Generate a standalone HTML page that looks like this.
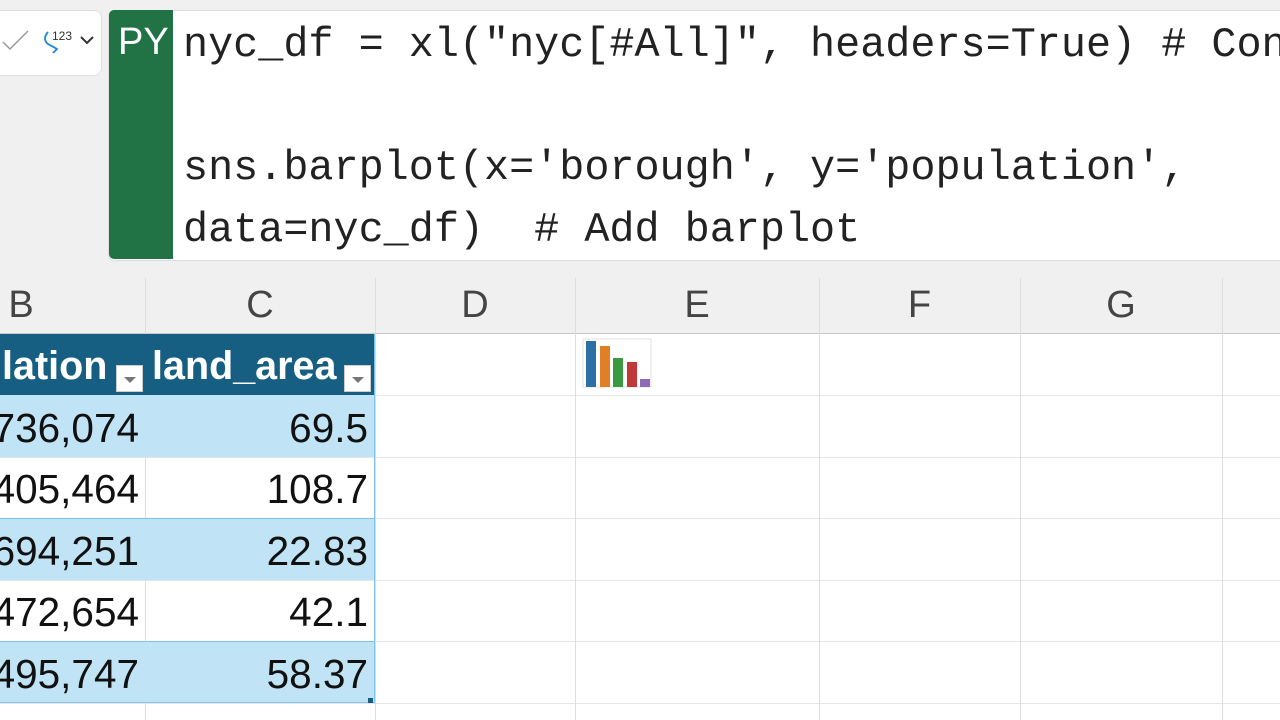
<!DOCTYPE html>
<html><head><style>
body{margin:0;width:1280px;height:720px;overflow:hidden;background:#f0f0f0;position:relative;font-family:"Liberation Sans",sans-serif}
.abs{position:absolute}
.code{font-family:"Liberation Mono",monospace;font-size:41.8px;color:#222;white-space:pre;position:absolute;left:183px;line-height:40px}
.vl{position:absolute;width:1px;background:#dedede}
.hl{position:absolute;height:1px;background:#e6e6e6;left:0;width:1280px}
.ch{position:absolute;top:284px;font-size:38px;color:#444;text-align:center}
.num{position:absolute;font-size:40.5px;color:#111;text-align:right;line-height:61px}
.hdr{position:absolute;font-size:39.5px;color:#fff;font-weight:bold;line-height:61px}
.dd{position:absolute;width:27px;height:27px;background:#fff;border:1px solid #ccc;box-sizing:border-box}
.dd:after{content:"";position:absolute;left:7px;top:11px;border-left:6px solid transparent;border-right:6px solid transparent;border-top:6px solid #777}
</style></head><body>
<div class="abs" style="left:-10px;top:10px;width:110px;height:64px;background:#fff;border:1px solid #ddd;border-radius:8px"></div>
<svg class="abs" style="left:0;top:25px" width="100" height="40"><path d="M3 17 L10 24 L28 6" stroke="#999" stroke-width="1.5" fill="none"/><path d="M48 7 Q42 14 48 19 L57 24 M52 21 L57 24 L53 28" stroke="#1e88d8" stroke-width="1.8" fill="none"/><text x="52" y="15" font-size="12" fill="#333" font-family="Liberation Sans">123</text><path d="M81 12 L87 18 L93 12" stroke="#333" stroke-width="2" fill="none"/></svg>
<div class="abs" style="left:108px;top:10px;width:1180px;height:249px;background:#fff;border:1px solid #ddd;border-radius:6px 0 0 6px"></div>
<div class="abs" style="left:109px;top:10px;width:64px;height:249px;background:#217346;border-radius:5px 0 0 5px"></div>
<div class="abs" style="left:118px;top:21px;color:#fff;font-size:38px">PY</div>
<div class="code" style="top:25px">nyc_df = xl("nyc[#All]", headers=True) # Con</div>
<div class="code" style="top:148px">sns.barplot(x='borough', y='population',</div>
<div class="code" style="top:210px">data=nyc_df)  # Add barplot</div>

<div class="abs" style="left:0;top:333px;width:1280px;height:387px;background:#fff"></div>
<div class="hl" style="top:333px;background:#c8c8c8"></div>
<div class="hl" style="top:395px"></div><div class="hl" style="top:457px"></div><div class="hl" style="top:518px"></div><div class="hl" style="top:580px"></div><div class="hl" style="top:641px"></div><div class="hl" style="top:703px"></div>
<div class="vl" style="left:145px;top:278px;height:442px"></div>
<div class="vl" style="left:375px;top:278px;height:442px"></div>
<div class="vl" style="left:575px;top:278px;height:442px"></div>
<div class="vl" style="left:819px;top:278px;height:442px"></div>
<div class="vl" style="left:1020px;top:278px;height:442px"></div>
<div class="vl" style="left:1222px;top:278px;height:442px"></div>
<div class="ch" style="left:0;width:42px">B</div>
<div class="ch" style="left:145px;width:230px">C</div>
<div class="ch" style="left:375px;width:200px">D</div>
<div class="ch" style="left:575px;width:244px">E</div>
<div class="ch" style="left:819px;width:201px">F</div>
<div class="ch" style="left:1020px;width:202px">G</div>

<div class="abs" style="left:0;top:334px;width:375px;height:61px;background:#175f82"></div>
<div class="abs" style="left:0;top:395px;width:375px;height:62px;background:#c0e4f5"></div>
<div class="abs" style="left:0;top:518px;width:375px;height:62px;background:#c0e4f5"></div>
<div class="abs" style="left:0;top:641px;width:375px;height:62px;background:#c0e4f5"></div>
<div class="abs" style="left:374px;top:334px;width:1px;height:369px;background:#7ec3ea"></div>
<div class="abs" style="left:0;top:702px;width:375px;height:1px;background:#7ec3ea"></div>
<div class="abs" style="left:0;top:518px;width:375px;height:1px;background:#7ec3ea"></div>
<div class="abs" style="left:0;top:641px;width:375px;height:1px;background:#7ec3ea"></div>
<div class="hdr" style="left:2px;top:336px">lation</div>
<div class="dd" style="left:116px;top:365px"></div>
<div class="hdr" style="left:152px;top:336px">land_area</div>
<div class="dd" style="left:344px;top:365px"></div>
<div class="num" style="right:1141px;top:398px">736,074</div><div class="num" style="right:912px;top:398px">69.5</div>
<div class="num" style="right:1141px;top:459px">405,464</div><div class="num" style="right:912px;top:459px">108.7</div>
<div class="num" style="right:1141px;top:521px">694,251</div><div class="num" style="right:912px;top:521px">22.83</div>
<div class="num" style="right:1141px;top:582px">472,654</div><div class="num" style="right:912px;top:582px">42.1</div>
<div class="num" style="right:1141px;top:644px">495,747</div><div class="num" style="right:912px;top:644px">58.37</div>
<div class="abs" style="left:368px;top:698px;width:5px;height:5px;background:#175f82"></div>

<svg class="abs" style="left:577px;top:335px" width="76" height="57"><rect x="0" y="0" width="76" height="57" fill="#fff"/><rect x="6" y="4" width="68" height="48" fill="none" stroke="#ccc" stroke-width=".6"/><rect x="9" y="6" width="10" height="46" fill="#2e6fa4"/><rect x="23" y="11" width="10" height="41" fill="#e07f26"/><rect x="36" y="23" width="10" height="29" fill="#3a9a42"/><rect x="50" y="27" width="10" height="25" fill="#c0383a"/><rect x="63" y="44" width="10" height="8" fill="#8e6bb5"/></svg>
</body></html>
